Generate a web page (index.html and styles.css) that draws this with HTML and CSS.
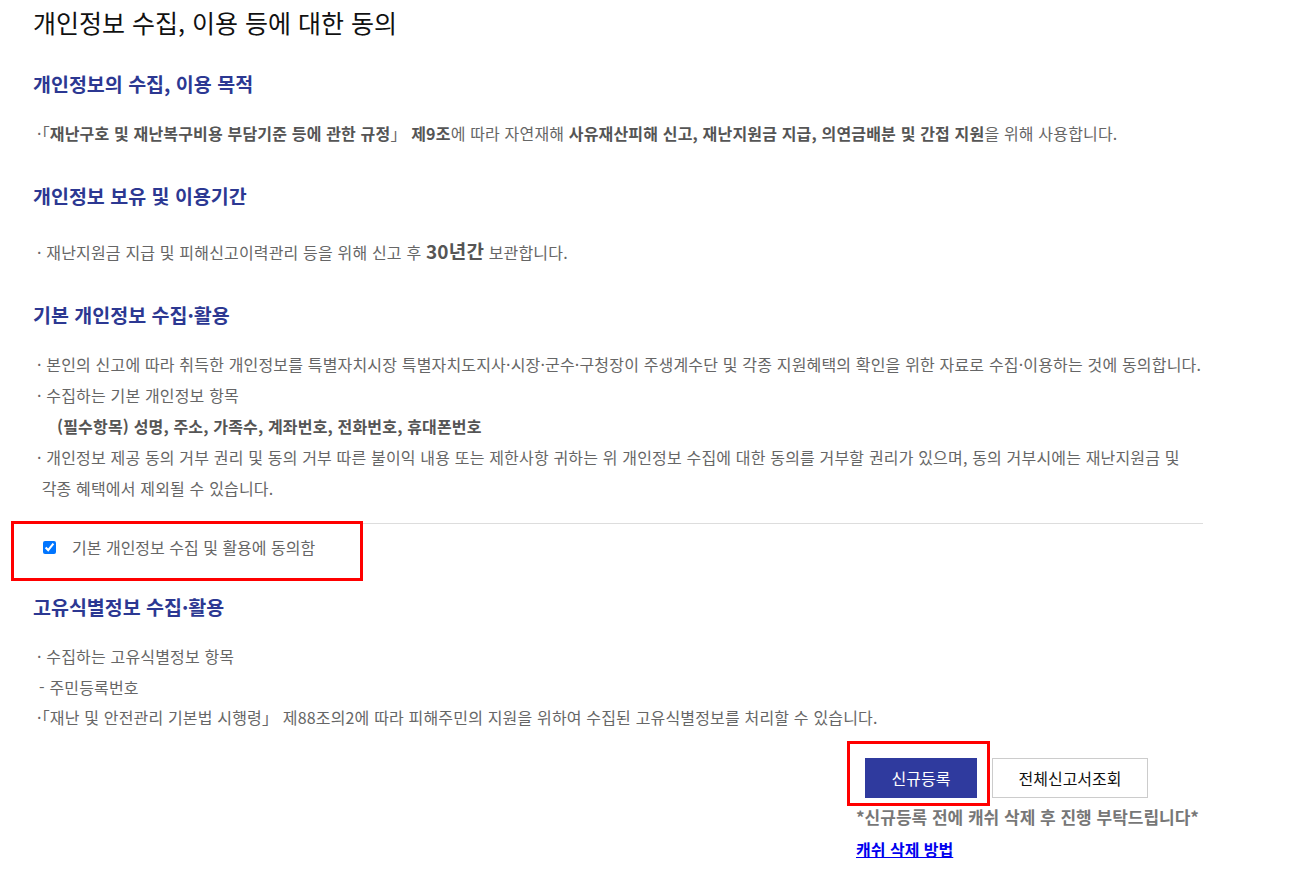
FILE: index.html
```html
<!DOCTYPE html>
<html lang="ko">
<head>
<meta charset="utf-8">
<title>개인정보 수집, 이용 등에 대한 동의</title>
<link rel="stylesheet" href="styles.css">
</head>
<body>
<div class="wrap">
  <h2 class="title">개인정보 수집, 이용 등에 대한 동의</h2>

  <section class="sec sec-first">
    <h3 class="sec-title">개인정보의 수집, 이용 목적</h3>
    <div class="txt">
      <p>·「<b>재난구호 및 재난복구비용 부담기준 등에 관한 규정</b>」 <b>제9조</b>에 따라 자연재해 <b>사유재산피해 신고, 재난지원금 지급, 의연금배분 및 간접 지원</b>을 위해 사용합니다.</p>
    </div>
  </section>

  <section class="sec">
    <h3 class="sec-title">개인정보 보유 및 이용기간</h3>
    <div class="txt txt-period">
      <p>· 재난지원금 지급 및 피해신고이력관리 등을 위해 신고 후 <b class="big">30년간</b> 보관합니다.</p>
    </div>
  </section>

  <section class="sec">
    <h3 class="sec-title">기본 개인정보 수집·활용</h3>
    <div class="txt">
      <p>· 본인의 신고에 따라 취득한 개인정보를 특별자치시장 특별자치도지사·시장·군수·구청장이 주생계수단 및 각종 지원혜택의 확인을 위한 자료로 수집·이용하는 것에 동의합니다.</p>
      <p>· 수집하는 기본 개인정보 항목</p>
      <p class="indent"><b>(필수항목) 성명, 주소, 가족수, 계좌번호, 전화번호, 휴대폰번호</b></p>
      <p>· 개인정보 제공 동의 거부 권리 및 동의 거부 따른 불이익 내용 또는 제한사항 귀하는 위 개인정보 수집에 대한 동의를 거부할 권리가 있으며, 동의 거부시에는 재난지원금 및<br>&nbsp;각종 혜택에서 제외될 수 있습니다.</p>
    </div>
  </section>

  <div class="agree">
    <label class="agree-row"><input type="checkbox" class="chk" checked> <span>기본 개인정보 수집 및 활용에 동의함</span></label>
    <span class="mark mark-agree"></span>
  </div>

  <section class="sec sec-unique">
    <h3 class="sec-title">고유식별정보 수집·활용</h3>
    <div class="txt txt-tight">
      <p>· 수집하는 고유식별정보 항목</p>
      <p class="dash">- 주민등록번호</p>
      <p>·「재난 및 안전관리 기본법 시행령」 제88조의2에 따라 피해주민의 지원을 위하여 수집된 고유식별정보를 처리할 수 있습니다.</p>
    </div>
  </section>

  <div class="bottom">
    <div class="bottom-inner">
      <div class="btns">
        <button class="btn btn-primary" type="button">신규등록</button>
        <button class="btn btn-line" type="button">전체신고서조회</button>
        <span class="mark mark-btn"></span>
      </div>
      <p class="note">*신규등록 전에 캐쉬 삭제 후 진행 부탁드립니다*</p>
      <a class="cache-link" href="#">캐쉬 삭제 방법</a>
    </div>
  </div>
</div>
</body>
</html>
```

FILE: styles.css
```css
* { box-sizing: border-box; }

html, body {
  margin: 0;
  padding: 0;
  background: #fff;
}

body {
  font-family: "Noto Sans CJK KR", "Noto Sans", sans-serif;
  color: #666;
}

.wrap {
  width: 1203px;
  padding-left: 33px;
}

.title {
  margin: 0;
  font-size: 25px;
  font-weight: 400;
  line-height: 44px;
  color: #111;
}

.sec-title {
  margin: 0;
  font-size: 19.5px;
  font-weight: 700;
  line-height: 30px;
  color: #2c3892;
}

.sec { margin-top: 32px; }
.sec-first { margin-top: 25px; }
.sec-unique { margin-top: 12px; }

.txt {
  margin-top: 19px;
  padding-left: 4px;
  font-size: 16px;
  line-height: 31px;
  letter-spacing: 0.17px;
}

.txt p { margin: 0; white-space: nowrap; }
.txt b { color: #555; font-weight: 700; }
.txt .big { font-size: 19px; }
.txt-period { margin-top: 24px; }
.txt-tight { line-height: 30.5px; }

.indent { padding-left: 20px; }
.dash { padding-left: 2px; }

.agree {
  position: relative;
  margin-top: 19px;
  border-top: 1px solid #ddd;
  height: 57px;
}

.agree-row {
  display: flex;
  align-items: center;
  gap: 16px;
  height: 46px;
  padding-left: 10px;
  font-size: 16px;
  color: #666;
}

.chk {
  margin: 0;
  width: 13px;
  height: 13px;
}

.mark {
  position: absolute;
  border: 3px solid #f00;
  pointer-events: none;
}

.mark-agree {
  left: -22px;
  top: -3px;
  width: 352px;
  height: 60px;
}

.bottom {
  display: flex;
  justify-content: flex-end;
  margin-top: 25px;
}

.bottom-inner {
  width: 347px;
}

.btns {
  position: relative;
  display: flex;
  gap: 15px;
  padding-left: 9px;
}

.btn {
  height: 40px;
  font-family: inherit;
  font-size: 16px;
  cursor: pointer;
  border-radius: 0;
}

.btn-primary {
  width: 112px;
  background: #2f3a9e;
  border: 1px solid #2f3a9e;
  color: #fff;
}

.btn-line {
  width: 156px;
  background: #fff;
  border: 1px solid #ccc;
  color: #111;
}

.mark-btn {
  left: -9px;
  top: -17px;
  width: 143px;
  height: 65px;
}

.note {
  margin: 8px 0 0;
  font-size: 17px;
  font-weight: 700;
  line-height: 22px;
  color: #777;
  white-space: nowrap;
}

.cache-link {
  display: inline-block;
  margin-top: 10px;
  font-size: 16px;
  font-weight: 700;
  line-height: 22px;
  color: #0000ee;
  text-decoration: underline;
}
```
